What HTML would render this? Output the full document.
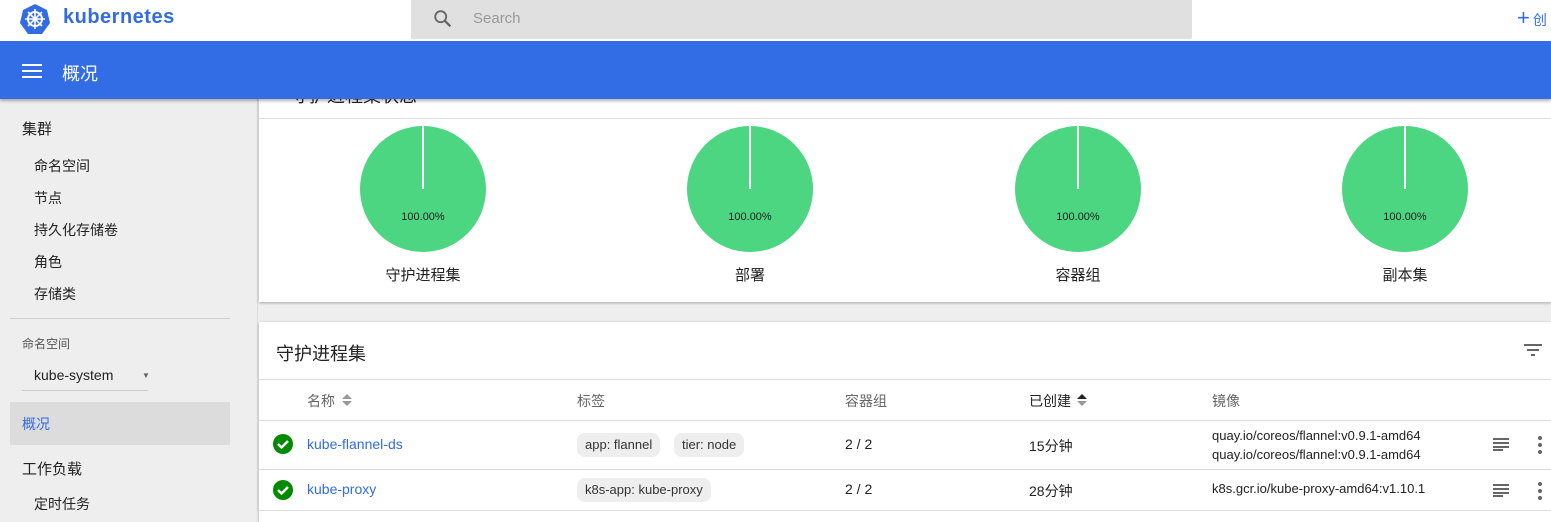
<!DOCTYPE html>
<html><head><meta charset="utf-8"><style>
*{margin:0;padding:0;box-sizing:border-box}
body{width:1551px;height:511px;overflow:hidden;background:#eeeeee;font-family:"Liberation Sans","Noto Sans CJK SC",sans-serif;position:relative;color:#222}
.a{position:absolute;white-space:nowrap}
.t{z-index:5}
.chip{position:absolute;background:#eeeeee;border-radius:8px;height:24px;line-height:24px;padding:0 8px;font-size:13px;color:#333}
.hd{font-size:14px;color:#666;top:391px}
.pie{position:absolute;width:126px;height:126px;border-radius:50%;background:#4cd681}
.pie:after{content:"";position:absolute;left:62px;top:0;width:2px;height:63px;background:#fff}
.pl{position:absolute;font-size:11px;color:#222;width:126px;text-align:center;top:85px}
.pn{position:absolute;font-size:15px;width:200px;text-align:center;top:265px}
</style></head><body>
<div class="a" style="left:0;top:0;width:1551px;height:41px;background:#fff;z-index:4"></div>
<svg class="a t" style="left:19px;top:3px" width="32" height="32" viewBox="0 0 32 32"><polygon points="16,1 28,7 31,20 23,31 9,31 1,20 4,7" fill="#326ce5"/><circle cx="16" cy="16" r="7" fill="none" stroke="#fff" stroke-width="2"/><g stroke="#fff" stroke-width="1.6"><line x1="16" y1="6" x2="16" y2="26"/><line x1="6" y1="16" x2="26" y2="16"/><line x1="9" y1="9" x2="23" y2="23"/><line x1="23" y1="9" x2="9" y2="23"/></g></svg>
<div class="a t" style="left:63px;top:6px;font-size:20px;font-weight:bold;color:#326ce5;letter-spacing:0.5px">kubernetes</div>
<div class="a t" style="left:411px;top:0;width:781px;height:39px;background:#e0e0e0;border-radius:0 0 2px 2px"></div>
<svg class="a t" style="left:432px;top:8px" width="22" height="22" viewBox="0 0 24 24"><circle cx="9.5" cy="9.5" r="6" fill="none" stroke="#666" stroke-width="2"/><line x1="14" y1="14" x2="20" y2="20" stroke="#666" stroke-width="2.5"/></svg>
<div class="a t" style="left:473px;top:10px;font-size:15px;color:#999">Search</div>
<div class="a t" style="left:1517px;top:5px;font-size:22px;color:#326ce5">+<span style="font-size:14px;margin-left:3px">创</span></div>
<div class="a" style="left:0;top:41px;width:1551px;height:58px;background:#326de6;box-shadow:0 2px 3px rgba(0,0,0,.3);z-index:2"></div>
<div class="a" style="left:22px;top:64px;width:20px;height:2px;background:#fff;box-shadow:0 6px 0 #fff,0 12px 0 #fff;z-index:3"></div>
<div class="a" style="left:62px;top:60px;font-size:18px;color:#fff;z-index:3">概况</div>
<!-- sidebar -->
<div class="a" style="left:0;top:99px;width:258px;height:412px;background:#eeeeee;border-right:1px solid #ddd"></div>
<div class="a" style="left:22px;top:118px;font-size:15px">集群</div>
<div class="a" style="left:34px;top:156px;font-size:14px">命名空间</div>
<div class="a" style="left:34px;top:188px;font-size:14px">节点</div>
<div class="a" style="left:34px;top:220px;font-size:14px">持久化存储卷</div>
<div class="a" style="left:34px;top:252px;font-size:14px">角色</div>
<div class="a" style="left:34px;top:284px;font-size:14px">存储类</div>
<div class="a" style="left:10px;top:318px;width:220px;height:1px;background:#d0d0d0"></div>
<div class="a" style="left:22px;top:335px;font-size:12px;color:#555">命名空间</div>
<div class="a" style="left:34px;top:367px;font-size:14px">kube-system</div>
<div class="a" style="left:142px;top:371px;font-size:8px;color:#666">▼</div>
<div class="a" style="left:22px;top:390px;width:126px;height:1px;background:#ccc"></div>
<div class="a" style="left:10px;top:402px;width:220px;height:43px;background:#dcdcdc"></div>
<div class="a" style="left:22px;top:414px;font-size:14px;color:#326ce5">概况</div>
<div class="a" style="left:22px;top:458px;font-size:15px">工作负载</div>
<div class="a" style="left:34px;top:494px;font-size:14px">定时任务</div>
<!-- card1 -->
<div class="a" style="left:259px;top:80px;width:1292px;height:222px;background:#fff;box-shadow:0 1px 3px rgba(0,0,0,.3)">
<div class="a" style="left:32px;top:2px;font-size:18px;color:#222">守护进程集状态</div>
<div class="a" style="left:0;top:38px;width:1292px;height:1px;background:#e0e0e0"></div>
<div class="pie" style="left:101px;top:46px"><div class="pl">100.00%</div></div>
<div class="pie" style="left:428px;top:46px"><div class="pl">100.00%</div></div>
<div class="pie" style="left:756px;top:46px"><div class="pl">100.00%</div></div>
<div class="pie" style="left:1083px;top:46px"><div class="pl">100.00%</div></div>
<div class="pn" style="left:64px;top:184px">守护进程集</div>
<div class="pn" style="left:391px;top:184px">部署</div>
<div class="pn" style="left:719px;top:184px">容器组</div>
<div class="pn" style="left:1046px;top:184px">副本集</div>
</div>
<!-- card2 -->
<div class="a" style="left:259px;top:322px;width:1292px;height:200px;background:#fff;box-shadow:0 1px 3px rgba(0,0,0,.3)"></div>
<div class="a" style="left:276px;top:340px;font-size:18px">守护进程集</div>
<svg class="a" style="left:1523px;top:343px" width="20" height="14"><g stroke="#666" stroke-width="2"><line x1="1" y1="2" x2="19" y2="2"/><line x1="4" y1="7" x2="16" y2="7"/><line x1="8" y1="12" x2="12" y2="12"/></g></svg>
<div class="a" style="left:259px;top:379px;width:1292px;height:1px;background:#ddd"></div>
<div class="a" style="left:259px;top:420px;width:1292px;height:1px;background:#ddd"></div>
<div class="a" style="left:259px;top:469px;width:1292px;height:1px;background:#ddd"></div>
<div class="a" style="left:259px;top:510px;width:1292px;height:1px;background:#ddd"></div>
<div class="a hd" style="left:307px">名称</div>
<svg class="a" style="left:341px;top:392px" width="12" height="16"><path d="M1 7L6 2L11 7Z M1 9L6 14L11 9Z" fill="#999"/></svg>
<div class="a hd" style="left:577px">标签</div>
<div class="a hd" style="left:845px">容器组</div>
<div class="a hd" style="left:1029px;color:#222">已创建</div>
<svg class="a" style="left:1076px;top:392px" width="12" height="16"><path d="M1 7L6 2L11 7Z" fill="#222"/><path d="M1 9L6 14L11 9Z" fill="#999"/></svg>
<div class="a hd" style="left:1212px">镜像</div>
<svg class="a" style="left:273px;top:434px" width="20" height="20"><circle cx="10" cy="10" r="10" fill="#008a00"/><path d="M5 10l3.5 3.5L15 7" stroke="#fff" stroke-width="2.4" fill="none"/></svg>
<svg class="a" style="left:273px;top:480px" width="20" height="20"><circle cx="10" cy="10" r="10" fill="#008a00"/><path d="M5 10l3.5 3.5L15 7" stroke="#fff" stroke-width="2.4" fill="none"/></svg>
<div class="a" style="left:307px;top:436px;font-size:14px;color:#326ce5">kube-flannel-ds</div>
<div class="a" style="left:307px;top:481px;font-size:14px;color:#326ce5">kube-proxy</div>
<div class="chip" style="left:577px;top:433px">app: flannel</div>
<div class="chip" style="left:674px;top:433px">tier: node</div>
<div class="chip" style="left:577px;top:478px">k8s-app: kube-proxy</div>
<div class="a" style="left:845px;top:436px;font-size:14px">2 / 2</div>
<div class="a" style="left:845px;top:481px;font-size:14px">2 / 2</div>
<div class="a" style="left:1029px;top:436px;font-size:14px">15分钟</div>
<div class="a" style="left:1029px;top:481px;font-size:14px">28分钟</div>
<div class="a" style="left:1212px;top:426px;font-size:13px;line-height:19px">quay.io/coreos/flannel:v0.9.1-amd64<br>quay.io/coreos/flannel:v0.9.1-amd64</div>
<div class="a" style="left:1212px;top:481px;font-size:13px">k8s.gcr.io/kube-proxy-amd64:v1.10.1</div>
<svg class="a" style="left:1492px;top:437px" width="18" height="14"><g stroke="#666" stroke-width="2"><line x1="1" y1="2" x2="17" y2="2"/><line x1="1" y1="6" x2="17" y2="6"/><line x1="1" y1="10" x2="17" y2="10"/><line x1="1" y1="13" x2="11" y2="13"/></g></svg>
<svg class="a" style="left:1492px;top:483px" width="18" height="14"><g stroke="#666" stroke-width="2"><line x1="1" y1="2" x2="17" y2="2"/><line x1="1" y1="6" x2="17" y2="6"/><line x1="1" y1="10" x2="17" y2="10"/><line x1="1" y1="13" x2="11" y2="13"/></g></svg>
<svg class="a" style="left:1536px;top:435px" width="8" height="20"><g fill="#666"><circle cx="4" cy="3" r="2"/><circle cx="4" cy="10" r="2"/><circle cx="4" cy="17" r="2"/></g></svg>
<svg class="a" style="left:1536px;top:481px" width="8" height="20"><g fill="#666"><circle cx="4" cy="3" r="2"/><circle cx="4" cy="10" r="2"/><circle cx="4" cy="17" r="2"/></g></svg>
</body></html>
